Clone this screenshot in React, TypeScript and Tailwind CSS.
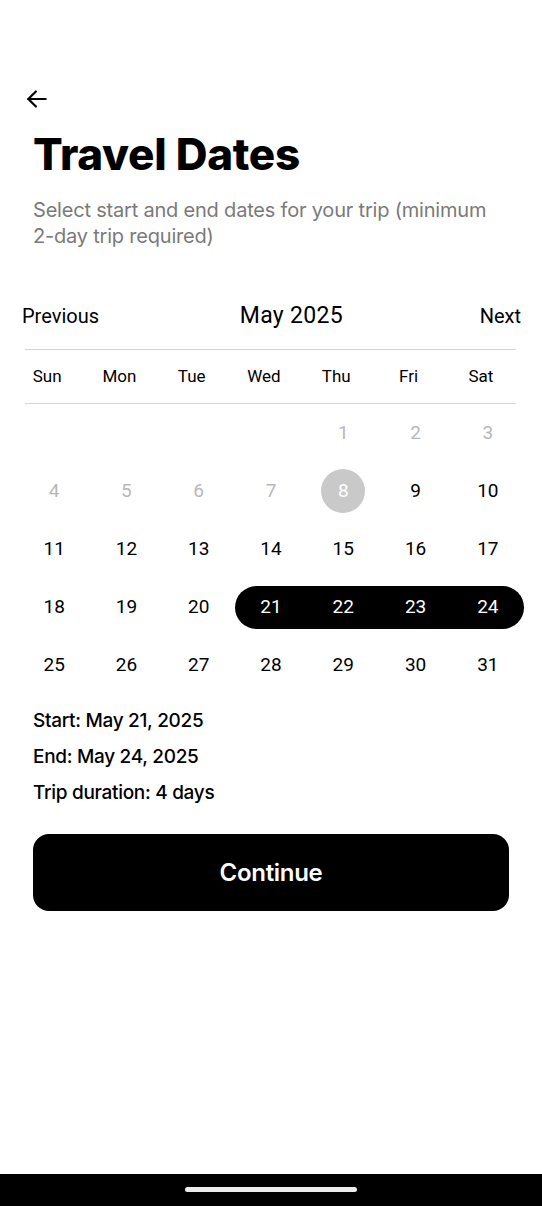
import React from 'react';

const WEEKDAYS = ['Sun', 'Mon', 'Tue', 'Wed', 'Thu', 'Fri', 'Sat'];

type Cell = { day: number | null; muted?: boolean; today?: boolean };

const buildCells = (): Cell[] => {
  const cells: Cell[] = [];
  for (let i = 0; i < 4; i++) cells.push({ day: null });
  for (let d = 1; d <= 31; d++) cells.push({ day: d, muted: d < 8, today: d === 8 });
  return cells;
};

const RANGE_START = 21;
const RANGE_END = 24;

const App: React.FC = () => {
  const cells = buildCells();
  const rows: Cell[][] = [];
  for (let i = 0; i < cells.length; i += 7) rows.push(cells.slice(i, i + 7));

  return (
    <div className="w-[542px] h-[1206px] bg-white flex flex-col overflow-hidden" style={{ fontFamily: 'Inter, "Noto Sans", sans-serif' }}>
      <div className="flex-1 flex flex-col">
        <div className="pt-[86px] pl-[24px]">
          <svg width="26" height="26" viewBox="0 0 24 24" fill="none" stroke="#000" strokeWidth="2" strokeLinecap="round" strokeLinejoin="round">
            <path d="M20 12H4" />
            <path d="M11 5l-7 7 7 7" />
          </svg>
        </div>

        <div className="px-[33px]">
          <h1 className="mt-[15px] text-[44px] leading-[54px] font-extrabold tracking-[-0.3px] text-black">Travel Dates</h1>
          <p className="mt-[16px] text-[20px] leading-[26px] text-[#7a7a7a] tracking-[-0.2px]">
            Select start and end dates for your trip (minimum 2-day trip required)
          </p>
        </div>

        <div className="mt-[49px]" style={{ fontFamily: 'Roboto, sans-serif' }}>
          <div className="flex items-center justify-between pl-[22px] pr-[21px] h-[36px]">
            <span className="text-[20px] text-black">Previous</span>
            <span className="text-[23px] text-black tracking-[0.3px] translate-x-[2px]">May 2025</span>
            <span className="text-[20px] text-black">Next</span>
          </div>

          <div className="mt-[15px] mx-[25px] w-[491px] border-t border-b border-[#d4d4d4] h-[55px]">
            <div className="grid grid-cols-7 w-[506px] -ml-[14px] h-full items-center">
              {WEEKDAYS.map((w) => (
                <span key={w} className="text-center text-[17px] text-black">{w}</span>
              ))}
            </div>
          </div>

          <div className="ml-[18px] w-[506px]">
            {rows.map((row, ri) => (
              <div key={ri} className="grid grid-cols-7 h-[58px] items-center">
                {row.map((c, ci) => {
                  if (c.day === null) return <span key={ci} />;
                  const inRange = c.day >= RANGE_START && c.day <= RANGE_END;
                  const isStart = c.day === RANGE_START;
                  const isEnd = c.day === RANGE_END;
                  if (inRange) {
                    return (
                      <div
                        key={ci}
                        className={`h-[43px] bg-black flex items-center justify-center text-[19px] text-white ${isStart ? 'rounded-l-full' : ''} ${isEnd ? 'rounded-r-full' : ''}`}
                      >
                        {c.day}
                      </div>
                    );
                  }
                  if (c.today) {
                    return (
                      <div key={ci} className="flex justify-center">
                        <div className="w-[44px] h-[44px] rounded-full bg-[#c9c9c9] flex items-center justify-center text-[19px] text-white">
                          {c.day}
                        </div>
                      </div>
                    );
                  }
                  return (
                    <span key={ci} className={`text-center text-[19px] ${c.muted ? 'text-[#b8b8b8]' : 'text-black'}`}>
                      {c.day}
                    </span>
                  );
                })}
              </div>
            ))}
          </div>
        </div>

        <div className="px-[33px] mt-[15px] flex flex-col gap-[12px] text-[19px] leading-[24px] font-medium text-black tracking-[-0.3px]">
          <span>Start: May 21, 2025</span>
          <span>End: May 24, 2025</span>
          <span>Trip duration: 4 days</span>
        </div>

        <div className="px-[33px] mt-[29px]">
          <button className="w-full h-[77px] bg-black rounded-[16px] text-white text-[24px] font-semibold tracking-[-0.3px]">
            Continue
          </button>
        </div>
      </div>

      <div className="h-[32px] bg-black flex items-center justify-center">
        <div className="w-[172px] h-[5px] rounded-full bg-[#ececec] -mt-[1px]" />
      </div>
    </div>
  );
};

export default App;
